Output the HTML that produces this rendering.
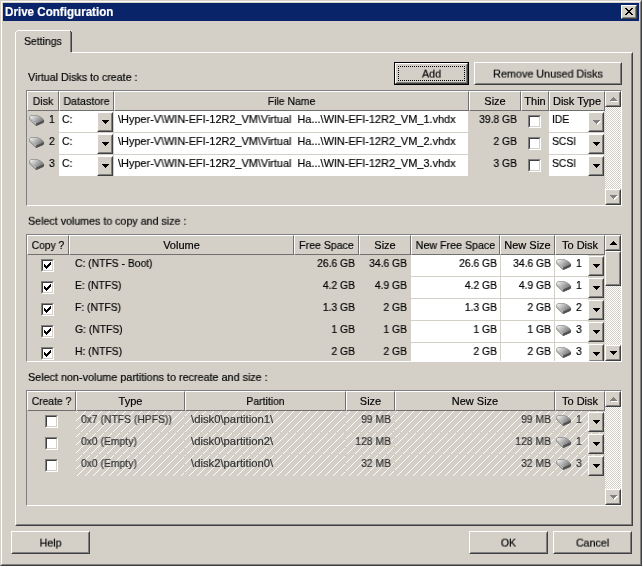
<!DOCTYPE html><html><head><meta charset='utf-8'><title>Drive Configuration</title><style>
*{box-sizing:border-box;margin:0;padding:0}
html,body{width:642px;height:566px;overflow:hidden;background:#d4d0c8}
body{font-family:"Liberation Sans",sans-serif;font-size:11px;color:#000;position:relative}
.a{position:absolute}
.t,.tr,.tc{will-change:transform;-webkit-text-stroke:0.18px}
.t{position:absolute;white-space:pre;line-height:13px;height:13px;transform-origin:0 50%}
.tr{position:absolute;white-space:pre;line-height:13px;height:13px;text-align:right;transform-origin:100% 50%}
.tc{position:absolute;white-space:pre;line-height:13px;height:13px;text-align:center}
.win{left:0;top:0;width:642px;height:566px;border:1px solid;border-color:#d4d0c8 #404040 #404040 #d4d0c8}
.win2{left:1px;top:1px;width:640px;height:564px;border:1px solid;border-color:#fff #808080 #808080 #fff}
.title{left:3px;top:3px;width:636px;height:18px;background:#0a246a}
.btn{background:#d4d0c8;border:1px solid;border-color:#fff #404040 #404040 #fff}
.btn:after{content:"";position:absolute;left:0;top:0;right:0;bottom:0;border:1px solid;border-color:#d4d0c8 #808080 #808080 #d4d0c8}
.hd{background:#d4d0c8;border:1px solid;border-color:#fff #707070 #707070 #fff;height:20px}
.sunk{border:1px solid;border-color:#808080 #fff #fff #808080}
.w{background:#fff}
.cb{width:13px;height:13px;background:#fff;border:1px solid;border-color:#808080 #fff #fff #808080}
.cb:after{content:"";position:absolute;left:0;top:0;right:0;bottom:0;border:1px solid;border-color:#404040 #d4d0c8 #d4d0c8 #404040}
.track{background:repeating-conic-gradient(#fff 0 25%,#d4d0c8 0 50%) 0 0/2px 2px}
.g{color:#303030}
</style></head><body>
<svg width="0" height="0" style="position:absolute"><defs>
<linearGradient id="dg" x1="0" y1="0" x2="1" y2="0.5"><stop offset="0" stop-color="#f6f6f6"/><stop offset="0.38" stop-color="#c6c6c6"/><stop offset="1" stop-color="#7c7c7c"/></linearGradient>

<pattern id="hp" width="8" height="8" patternUnits="userSpaceOnUse" patternTransform="translate(2,0)" shape-rendering="crispEdges"><path d="M7 0h1v1h-1zM6 1h1v1h-1zM5 2h1v1h-1zM4 3h1v1h-1zM3 4h1v1h-1zM2 5h1v1h-1zM1 6h1v1h-1zM0 7h1v1h-1z" fill="#fff" fill-opacity="1"/></pattern>
</defs></svg>
<div class="a win"></div><div class="a win2"></div>
<div class="a title"></div>
<div class="t" style="left:5px;top:5px;color:#fff;font-weight:bold;font-size:11.5px;transform:translateY(.7px) scale(1.01,1.06)">Drive Configuration</div>
<div class="a btn" style="left:621px;top:5px;width:16px;height:14px"></div>
<svg class="a" style="left:625px;top:8px" width="8" height="7" shape-rendering="crispEdges"><path d="M0 0h2v1h1v1h2v-1h1v-1h2v1h-1v1h-1v1h-1v1h1v1h1v1h1v1h-2v-1h-1v-1h-2v1h-1v1h-2v-1h1v-1h1v-1h1v-1h-1v-1h-1v-1h-1z" fill="#000"/></svg>
<div class="a" style="left:15px;top:52px;width:618px;height:474px;border:1px solid;border-color:#fff #404040 #404040 #fff"></div>
<div class="a" style="left:16px;top:53px;width:616px;height:472px;border:1px solid;border-color:#d4d0c8 #808080 #808080 #d4d0c8"></div>
<div class="a" style="left:15px;top:30px;width:57px;height:24px;background:#d4d0c8"></div>
<div class="a" style="left:15px;top:30px;width:2px;height:2px;background:#d4d0c8"></div>
<div class="a" style="left:17px;top:30px;width:53px;height:1px;background:#fff"></div>
<div class="a" style="left:16px;top:31px;width:1px;height:1px;background:#fff"></div>
<div class="a" style="left:15px;top:32px;width:1px;height:22px;background:#fff"></div>
<div class="a" style="left:70px;top:31px;width:1px;height:1px;background:#404040"></div>
<div class="a" style="left:71px;top:32px;width:1px;height:20px;background:#404040"></div>
<div class="a" style="left:70px;top:32px;width:1px;height:20px;background:#808080"></div>
<div class="a" style="left:70px;top:30px;width:2px;height:1px;background:#d4d0c8"></div><div class="a" style="left:71px;top:31px;width:1px;height:1px;background:#d4d0c8"></div>
<div class="t" style="left:24px;top:35px;transform:scaleX(.95)">Settings</div>
<div class="t" style="left:28px;top:71px;transform:scaleX(.97)">Virtual Disks to create :</div>
<div class="t" style="left:28px;top:214px;transform:translateY(.8px) scaleX(.97)">Select volumes to copy and size :</div>
<div class="t" style="left:28px;top:371px;transform:scaleX(.98)">Select non-volume partitions to recreate and size :</div>
<div class="a" style="left:394px;top:62px;width:75px;height:23px;border:1px solid #000"></div>
<div class="a btn" style="left:395px;top:63px;width:73px;height:21px"></div>
<div class="a" style="left:398px;top:66px;width:67px;height:15px;border:1px dotted #000"></div>
<div class="tc" style="left:394px;top:67px;width:75px;transform:translateY(.6px) scaleX(0.97)">Add</div>
<div class="a btn" style="left:474px;top:62px;width:148px;height:23px"></div>
<div class="tc" style="left:474px;top:67px;width:148px;transform:translateY(.6px) scaleX(0.98)">Remove Unused Disks</div>
<div class="a btn" style="left:11px;top:531px;width:79px;height:23px"></div>
<div class="tc" style="left:11px;top:536px;width:79px;transform:translateY(.6px) scaleX(0.97)">Help</div>
<div class="a btn" style="left:469px;top:531px;width:79px;height:23px"></div>
<div class="tc" style="left:469px;top:536px;width:79px;transform:translateY(.6px) scaleX(0.95)">OK</div>
<div class="a btn" style="left:553px;top:531px;width:79px;height:23px"></div>
<div class="tc" style="left:553px;top:536px;width:79px;transform:translateY(.6px) scaleX(0.97)">Cancel</div>
<div class="a sunk" style="left:26px;top:90px;width:596px;height:116px"></div>
<div class="a hd" style="left:27px;top:91px;width:32px"></div>
<div class="tc" style="left:27px;top:95px;width:32px;transform:scaleX(0.95)">Disk</div>
<div class="a hd" style="left:59px;top:91px;width:55px"></div>
<div class="tc" style="left:59px;top:95px;width:55px;transform:scaleX(0.97)">Datastore</div>
<div class="a hd" style="left:114px;top:91px;width:355px"></div>
<div class="tc" style="left:114px;top:95px;width:355px;transform:scaleX(0.95)">File Name</div>
<div class="a hd" style="left:469px;top:91px;width:52px"></div>
<div class="tc" style="left:469px;top:95px;width:52px;transform:scaleX(1)">Size</div>
<div class="a hd" style="left:521px;top:91px;width:28px"></div>
<div class="tc" style="left:521px;top:95px;width:28px;transform:scaleX(1)">Thin</div>
<div class="a hd" style="left:549px;top:91px;width:56px"></div>
<div class="tc" style="left:549px;top:95px;width:56px;transform:scaleX(1)">Disk Type</div>
<div class="a track" style="left:605px;top:91px;width:16px;height:114px"></div>
<div class="a btn" style="left:605px;top:91px;width:16px;height:16px"></div>
<svg class="a" style="left:611px;top:98px" width="7" height="4" shape-rendering="crispEdges"><path d="M0 4h7v-1h-1v-1h-1v-1h-1v-1h-1v1h-1v1h-1v1h-1z" fill="#fff"/></svg>
<svg class="a" style="left:610px;top:97px" width="7" height="4" shape-rendering="crispEdges"><path d="M0 4h7v-1h-1v-1h-1v-1h-1v-1h-1v1h-1v1h-1v1h-1z" fill="#808080"/></svg>
<div class="a btn" style="left:605px;top:189px;width:16px;height:16px"></div>
<svg class="a" style="left:611px;top:196px" width="7" height="4" shape-rendering="crispEdges"><path d="M0 0h7v1h-1v1h-1v1h-1v1h-1v-1h-1v-1h-1v-1h-1z" fill="#fff"/></svg>
<svg class="a" style="left:610px;top:195px" width="7" height="4" shape-rendering="crispEdges"><path d="M0 0h7v1h-1v1h-1v1h-1v1h-1v-1h-1v-1h-1v-1h-1z" fill="#808080"/></svg>
<svg class="a" style="left:28.5px;top:114.5px" width="16" height="11.3" viewBox="0 0 17 12"><path d="M0.9 1.8 L1.8 0.8 L8.6 0.6 L12 2 L14.7 4 L15.6 6.2 L15.2 7.9 L7.8 11.2 L6.8 10.8 L1.2 5.4 L0.7 4.6 Z" fill="#9c9c9c" stroke="#808080" stroke-width="0.8" stroke-linejoin="round"/><path d="M7.9 9 L15.6 5.6 L15.2 7.9 L7.8 11.2 Z" fill="#505050" stroke="#505050" stroke-width="0.9" stroke-linejoin="round"/><path d="M1.1 2 L1.9 1.1 L8.6 0.9 L12 2.3 L14.5 4.2 L15.2 5.5 L7.9 8.7 L1.1 3.5 Z" fill="url(#dg)"/><path d="M1.3 4.3 L7.6 9.6" stroke="#e0e0e0" stroke-width="0.6" fill="none"/></svg>
<div class="t" style="left:49px;top:113px;transform:scaleX(0.94);">1</div>
<div class="a w" style="left:59px;top:111px;width:54px;height:21px"></div>
<div class="t" style="left:62px;top:113px;transform:scaleX(0.94);">C:</div>
<div class="a btn" style="left:97px;top:112px;width:16px;height:20px"></div>
<svg class="a" style="left:102px;top:120px" width="7" height="4" shape-rendering="crispEdges"><path d="M0 0h7v1h-1v1h-1v1h-1v1h-1v-1h-1v-1h-1v-1h-1z" fill="#000"/></svg>
<div class="a w" style="left:114px;top:111px;width:354px;height:21px"></div>
<div class="t" style="left:118px;top:113px;transform:scaleX(0.99);">\Hyper-V\WIN-EFI-12R2_VM\Virtual  Ha...\WIN-EFI-12R2_VM_1.vhdx</div>
<div class="tr" style="left:416.5px;width:100px;top:113px;transform:scaleX(0.94)">39.8 GB</div>
<div class="a cb" style="left:528px;top:115px"></div>
<div class="a w" style="left:549px;top:111px;width:55px;height:21px"></div>
<div class="t" style="left:552px;top:113px;transform:scaleX(0.94);">IDE</div>
<div class="a btn" style="left:588px;top:112px;width:16px;height:20px"></div>
<svg class="a" style="left:594px;top:121px" width="7" height="4" shape-rendering="crispEdges"><path d="M0 0h7v1h-1v1h-1v1h-1v1h-1v-1h-1v-1h-1v-1h-1z" fill="#fff"/></svg>
<svg class="a" style="left:593px;top:120px" width="7" height="4" shape-rendering="crispEdges"><path d="M0 0h7v1h-1v1h-1v1h-1v1h-1v-1h-1v-1h-1v-1h-1z" fill="#808080"/></svg>
<svg class="a" style="left:28.5px;top:136.5px" width="16" height="11.3" viewBox="0 0 17 12"><path d="M0.9 1.8 L1.8 0.8 L8.6 0.6 L12 2 L14.7 4 L15.6 6.2 L15.2 7.9 L7.8 11.2 L6.8 10.8 L1.2 5.4 L0.7 4.6 Z" fill="#9c9c9c" stroke="#808080" stroke-width="0.8" stroke-linejoin="round"/><path d="M7.9 9 L15.6 5.6 L15.2 7.9 L7.8 11.2 Z" fill="#505050" stroke="#505050" stroke-width="0.9" stroke-linejoin="round"/><path d="M1.1 2 L1.9 1.1 L8.6 0.9 L12 2.3 L14.5 4.2 L15.2 5.5 L7.9 8.7 L1.1 3.5 Z" fill="url(#dg)"/><path d="M1.3 4.3 L7.6 9.6" stroke="#e0e0e0" stroke-width="0.6" fill="none"/></svg>
<div class="t" style="left:49px;top:135px;transform:scaleX(0.94);">2</div>
<div class="a w" style="left:59px;top:133px;width:54px;height:21px"></div>
<div class="t" style="left:62px;top:135px;transform:scaleX(0.94);">C:</div>
<div class="a btn" style="left:97px;top:134px;width:16px;height:20px"></div>
<svg class="a" style="left:102px;top:142px" width="7" height="4" shape-rendering="crispEdges"><path d="M0 0h7v1h-1v1h-1v1h-1v1h-1v-1h-1v-1h-1v-1h-1z" fill="#000"/></svg>
<div class="a w" style="left:114px;top:133px;width:354px;height:21px"></div>
<div class="t" style="left:118px;top:135px;transform:scaleX(0.99);">\Hyper-V\WIN-EFI-12R2_VM\Virtual  Ha...\WIN-EFI-12R2_VM_2.vhdx</div>
<div class="tr" style="left:416.5px;width:100px;top:135px;transform:scaleX(0.94)">2 GB</div>
<div class="a cb" style="left:528px;top:137px"></div>
<div class="a w" style="left:549px;top:133px;width:55px;height:21px"></div>
<div class="t" style="left:552px;top:135px;transform:scaleX(0.94);">SCSI</div>
<div class="a btn" style="left:588px;top:134px;width:16px;height:20px"></div>
<svg class="a" style="left:593px;top:142px" width="7" height="4" shape-rendering="crispEdges"><path d="M0 0h7v1h-1v1h-1v1h-1v1h-1v-1h-1v-1h-1v-1h-1z" fill="#000"/></svg>
<svg class="a" style="left:28.5px;top:158.5px" width="16" height="11.3" viewBox="0 0 17 12"><path d="M0.9 1.8 L1.8 0.8 L8.6 0.6 L12 2 L14.7 4 L15.6 6.2 L15.2 7.9 L7.8 11.2 L6.8 10.8 L1.2 5.4 L0.7 4.6 Z" fill="#9c9c9c" stroke="#808080" stroke-width="0.8" stroke-linejoin="round"/><path d="M7.9 9 L15.6 5.6 L15.2 7.9 L7.8 11.2 Z" fill="#505050" stroke="#505050" stroke-width="0.9" stroke-linejoin="round"/><path d="M1.1 2 L1.9 1.1 L8.6 0.9 L12 2.3 L14.5 4.2 L15.2 5.5 L7.9 8.7 L1.1 3.5 Z" fill="url(#dg)"/><path d="M1.3 4.3 L7.6 9.6" stroke="#e0e0e0" stroke-width="0.6" fill="none"/></svg>
<div class="t" style="left:49px;top:157px;transform:scaleX(0.94);">3</div>
<div class="a w" style="left:59px;top:155px;width:54px;height:21px"></div>
<div class="t" style="left:62px;top:157px;transform:scaleX(0.94);">C:</div>
<div class="a btn" style="left:97px;top:156px;width:16px;height:20px"></div>
<svg class="a" style="left:102px;top:164px" width="7" height="4" shape-rendering="crispEdges"><path d="M0 0h7v1h-1v1h-1v1h-1v1h-1v-1h-1v-1h-1v-1h-1z" fill="#000"/></svg>
<div class="a w" style="left:114px;top:155px;width:354px;height:21px"></div>
<div class="t" style="left:118px;top:157px;transform:scaleX(0.99);">\Hyper-V\WIN-EFI-12R2_VM\Virtual  Ha...\WIN-EFI-12R2_VM_3.vhdx</div>
<div class="tr" style="left:416.5px;width:100px;top:157px;transform:scaleX(0.94)">3 GB</div>
<div class="a cb" style="left:528px;top:159px"></div>
<div class="a w" style="left:549px;top:155px;width:55px;height:21px"></div>
<div class="t" style="left:552px;top:157px;transform:scaleX(0.94);">SCSI</div>
<div class="a btn" style="left:588px;top:156px;width:16px;height:20px"></div>
<svg class="a" style="left:593px;top:164px" width="7" height="4" shape-rendering="crispEdges"><path d="M0 0h7v1h-1v1h-1v1h-1v1h-1v-1h-1v-1h-1v-1h-1z" fill="#000"/></svg>
<div class="a sunk" style="left:26px;top:234px;width:596px;height:128px"></div>
<div class="a hd" style="left:27px;top:235px;width:42px"></div>
<div class="tc" style="left:27px;top:239px;width:42px;transform:scaleX(0.93)">Copy ?</div>
<div class="a hd" style="left:69px;top:235px;width:225px"></div>
<div class="tc" style="left:69px;top:239px;width:225px;transform:scaleX(1)">Volume</div>
<div class="a hd" style="left:294px;top:235px;width:65px"></div>
<div class="tc" style="left:294px;top:239px;width:65px;transform:scaleX(0.96)">Free Space</div>
<div class="a hd" style="left:359px;top:235px;width:52px"></div>
<div class="tc" style="left:359px;top:239px;width:52px;transform:scaleX(1)">Size</div>
<div class="a hd" style="left:411px;top:235px;width:89px"></div>
<div class="tc" style="left:411px;top:239px;width:89px;transform:scaleX(0.97)">New Free Space</div>
<div class="a hd" style="left:500px;top:235px;width:55px"></div>
<div class="tc" style="left:500px;top:239px;width:55px;transform:scaleX(1)">New Size</div>
<div class="a hd" style="left:555px;top:235px;width:50px"></div>
<div class="tc" style="left:555px;top:239px;width:50px;transform:scaleX(1)">To Disk</div>
<div class="a track" style="left:605px;top:235px;width:16px;height:126px"></div>
<div class="a btn" style="left:605px;top:235px;width:16px;height:16px"></div>
<svg class="a" style="left:610px;top:241px" width="7" height="4" shape-rendering="crispEdges"><path d="M0 4h7v-1h-1v-1h-1v-1h-1v-1h-1v1h-1v1h-1v1h-1z" fill="#000"/></svg>
<div class="a btn" style="left:605px;top:345px;width:16px;height:16px"></div>
<svg class="a" style="left:610px;top:351px" width="7" height="4" shape-rendering="crispEdges"><path d="M0 0h7v1h-1v1h-1v1h-1v1h-1v-1h-1v-1h-1v-1h-1z" fill="#000"/></svg>
<div class="a btn" style="left:605px;top:251px;width:16px;height:35px"></div>
<div class="a cb" style="left:41px;top:259px"></div>
<svg class="a" style="left:44px;top:262px" width="7" height="7" shape-rendering="crispEdges"><path d="M0 2v3h1v1h1v1h1v-1h1v-1h1v-1h1v-1h1v-3h-1v1h-1v1h-1v1h-1v1h-1v-1h-1v-1z" fill="#000"/></svg>
<div class="t" style="left:75px;top:257px;transform:scaleX(0.94);">C: (NTFS - Boot)</div>
<div class="tr" style="left:254.5px;width:100px;top:257px;transform:scaleX(0.94)">26.6 GB</div>
<div class="tr" style="left:306.5px;width:100px;top:257px;transform:scaleX(0.94)">34.6 GB</div>
<div class="a w" style="left:411px;top:255px;width:89px;height:21px"></div>
<div class="tr" style="left:396.5px;width:100px;top:257px;transform:scaleX(0.94)">26.6 GB</div>
<div class="a w" style="left:501px;top:255px;width:53px;height:21px"></div>
<div class="tr" style="left:450.5px;width:100px;top:257px;transform:scaleX(0.94)">34.6 GB</div>
<div class="a w" style="left:555px;top:255px;width:33px;height:21px"></div>
<svg class="a" style="left:555.5px;top:258.5px" width="16" height="11.3" viewBox="0 0 17 12"><path d="M0.9 1.8 L1.8 0.8 L8.6 0.6 L12 2 L14.7 4 L15.6 6.2 L15.2 7.9 L7.8 11.2 L6.8 10.8 L1.2 5.4 L0.7 4.6 Z" fill="#9c9c9c" stroke="#808080" stroke-width="0.8" stroke-linejoin="round"/><path d="M7.9 9 L15.6 5.6 L15.2 7.9 L7.8 11.2 Z" fill="#505050" stroke="#505050" stroke-width="0.9" stroke-linejoin="round"/><path d="M1.1 2 L1.9 1.1 L8.6 0.9 L12 2.3 L14.5 4.2 L15.2 5.5 L7.9 8.7 L1.1 3.5 Z" fill="url(#dg)"/><path d="M1.3 4.3 L7.6 9.6" stroke="#e0e0e0" stroke-width="0.6" fill="none"/></svg>
<div class="t" style="left:576px;top:257px;transform:scaleX(0.94);">1</div>
<div class="a btn" style="left:588px;top:256px;width:16px;height:20px"></div>
<svg class="a" style="left:593px;top:264px" width="7" height="4" shape-rendering="crispEdges"><path d="M0 0h7v1h-1v1h-1v1h-1v1h-1v-1h-1v-1h-1v-1h-1z" fill="#000"/></svg>
<div class="a cb" style="left:41px;top:281px"></div>
<svg class="a" style="left:44px;top:284px" width="7" height="7" shape-rendering="crispEdges"><path d="M0 2v3h1v1h1v1h1v-1h1v-1h1v-1h1v-1h1v-3h-1v1h-1v1h-1v1h-1v1h-1v-1h-1v-1z" fill="#000"/></svg>
<div class="t" style="left:75px;top:279px;transform:scaleX(0.94);">E: (NTFS)</div>
<div class="tr" style="left:254.5px;width:100px;top:279px;transform:scaleX(0.94)">4.2 GB</div>
<div class="tr" style="left:306.5px;width:100px;top:279px;transform:scaleX(0.94)">4.9 GB</div>
<div class="a w" style="left:411px;top:277px;width:89px;height:21px"></div>
<div class="tr" style="left:396.5px;width:100px;top:279px;transform:scaleX(0.94)">4.2 GB</div>
<div class="a w" style="left:501px;top:277px;width:53px;height:21px"></div>
<div class="tr" style="left:450.5px;width:100px;top:279px;transform:scaleX(0.94)">4.9 GB</div>
<div class="a w" style="left:555px;top:277px;width:33px;height:21px"></div>
<svg class="a" style="left:555.5px;top:280.5px" width="16" height="11.3" viewBox="0 0 17 12"><path d="M0.9 1.8 L1.8 0.8 L8.6 0.6 L12 2 L14.7 4 L15.6 6.2 L15.2 7.9 L7.8 11.2 L6.8 10.8 L1.2 5.4 L0.7 4.6 Z" fill="#9c9c9c" stroke="#808080" stroke-width="0.8" stroke-linejoin="round"/><path d="M7.9 9 L15.6 5.6 L15.2 7.9 L7.8 11.2 Z" fill="#505050" stroke="#505050" stroke-width="0.9" stroke-linejoin="round"/><path d="M1.1 2 L1.9 1.1 L8.6 0.9 L12 2.3 L14.5 4.2 L15.2 5.5 L7.9 8.7 L1.1 3.5 Z" fill="url(#dg)"/><path d="M1.3 4.3 L7.6 9.6" stroke="#e0e0e0" stroke-width="0.6" fill="none"/></svg>
<div class="t" style="left:576px;top:279px;transform:scaleX(0.94);">1</div>
<div class="a btn" style="left:588px;top:278px;width:16px;height:20px"></div>
<svg class="a" style="left:593px;top:286px" width="7" height="4" shape-rendering="crispEdges"><path d="M0 0h7v1h-1v1h-1v1h-1v1h-1v-1h-1v-1h-1v-1h-1z" fill="#000"/></svg>
<div class="a cb" style="left:41px;top:303px"></div>
<svg class="a" style="left:44px;top:306px" width="7" height="7" shape-rendering="crispEdges"><path d="M0 2v3h1v1h1v1h1v-1h1v-1h1v-1h1v-1h1v-3h-1v1h-1v1h-1v1h-1v1h-1v-1h-1v-1z" fill="#000"/></svg>
<div class="t" style="left:75px;top:301px;transform:scaleX(0.94);">F: (NTFS)</div>
<div class="tr" style="left:254.5px;width:100px;top:301px;transform:scaleX(0.94)">1.3 GB</div>
<div class="tr" style="left:306.5px;width:100px;top:301px;transform:scaleX(0.94)">2 GB</div>
<div class="a w" style="left:411px;top:299px;width:89px;height:21px"></div>
<div class="tr" style="left:396.5px;width:100px;top:301px;transform:scaleX(0.94)">1.3 GB</div>
<div class="a w" style="left:501px;top:299px;width:53px;height:21px"></div>
<div class="tr" style="left:450.5px;width:100px;top:301px;transform:scaleX(0.94)">2 GB</div>
<div class="a w" style="left:555px;top:299px;width:33px;height:21px"></div>
<svg class="a" style="left:555.5px;top:302.5px" width="16" height="11.3" viewBox="0 0 17 12"><path d="M0.9 1.8 L1.8 0.8 L8.6 0.6 L12 2 L14.7 4 L15.6 6.2 L15.2 7.9 L7.8 11.2 L6.8 10.8 L1.2 5.4 L0.7 4.6 Z" fill="#9c9c9c" stroke="#808080" stroke-width="0.8" stroke-linejoin="round"/><path d="M7.9 9 L15.6 5.6 L15.2 7.9 L7.8 11.2 Z" fill="#505050" stroke="#505050" stroke-width="0.9" stroke-linejoin="round"/><path d="M1.1 2 L1.9 1.1 L8.6 0.9 L12 2.3 L14.5 4.2 L15.2 5.5 L7.9 8.7 L1.1 3.5 Z" fill="url(#dg)"/><path d="M1.3 4.3 L7.6 9.6" stroke="#e0e0e0" stroke-width="0.6" fill="none"/></svg>
<div class="t" style="left:576px;top:301px;transform:scaleX(0.94);">2</div>
<div class="a btn" style="left:588px;top:300px;width:16px;height:20px"></div>
<svg class="a" style="left:593px;top:308px" width="7" height="4" shape-rendering="crispEdges"><path d="M0 0h7v1h-1v1h-1v1h-1v1h-1v-1h-1v-1h-1v-1h-1z" fill="#000"/></svg>
<div class="a cb" style="left:41px;top:325px"></div>
<svg class="a" style="left:44px;top:328px" width="7" height="7" shape-rendering="crispEdges"><path d="M0 2v3h1v1h1v1h1v-1h1v-1h1v-1h1v-1h1v-3h-1v1h-1v1h-1v1h-1v1h-1v-1h-1v-1z" fill="#000"/></svg>
<div class="t" style="left:75px;top:323px;transform:scaleX(0.94);">G: (NTFS)</div>
<div class="tr" style="left:254.5px;width:100px;top:323px;transform:scaleX(0.94)">1 GB</div>
<div class="tr" style="left:306.5px;width:100px;top:323px;transform:scaleX(0.94)">1 GB</div>
<div class="a w" style="left:411px;top:321px;width:89px;height:21px"></div>
<div class="tr" style="left:396.5px;width:100px;top:323px;transform:scaleX(0.94)">1 GB</div>
<div class="a w" style="left:501px;top:321px;width:53px;height:21px"></div>
<div class="tr" style="left:450.5px;width:100px;top:323px;transform:scaleX(0.94)">1 GB</div>
<div class="a w" style="left:555px;top:321px;width:33px;height:21px"></div>
<svg class="a" style="left:555.5px;top:324.5px" width="16" height="11.3" viewBox="0 0 17 12"><path d="M0.9 1.8 L1.8 0.8 L8.6 0.6 L12 2 L14.7 4 L15.6 6.2 L15.2 7.9 L7.8 11.2 L6.8 10.8 L1.2 5.4 L0.7 4.6 Z" fill="#9c9c9c" stroke="#808080" stroke-width="0.8" stroke-linejoin="round"/><path d="M7.9 9 L15.6 5.6 L15.2 7.9 L7.8 11.2 Z" fill="#505050" stroke="#505050" stroke-width="0.9" stroke-linejoin="round"/><path d="M1.1 2 L1.9 1.1 L8.6 0.9 L12 2.3 L14.5 4.2 L15.2 5.5 L7.9 8.7 L1.1 3.5 Z" fill="url(#dg)"/><path d="M1.3 4.3 L7.6 9.6" stroke="#e0e0e0" stroke-width="0.6" fill="none"/></svg>
<div class="t" style="left:576px;top:323px;transform:scaleX(0.94);">3</div>
<div class="a btn" style="left:588px;top:322px;width:16px;height:20px"></div>
<svg class="a" style="left:593px;top:330px" width="7" height="4" shape-rendering="crispEdges"><path d="M0 0h7v1h-1v1h-1v1h-1v1h-1v-1h-1v-1h-1v-1h-1z" fill="#000"/></svg>
<div class="a cb" style="left:41px;top:347px"></div>
<svg class="a" style="left:44px;top:350px" width="7" height="7" shape-rendering="crispEdges"><path d="M0 2v3h1v1h1v1h1v-1h1v-1h1v-1h1v-1h1v-3h-1v1h-1v1h-1v1h-1v1h-1v-1h-1v-1z" fill="#000"/></svg>
<div class="t" style="left:75px;top:345px;transform:scaleX(0.94);">H: (NTFS)</div>
<div class="tr" style="left:254.5px;width:100px;top:345px;transform:scaleX(0.94)">2 GB</div>
<div class="tr" style="left:306.5px;width:100px;top:345px;transform:scaleX(0.94)">2 GB</div>
<div class="a w" style="left:411px;top:343px;width:89px;height:18px"></div>
<div class="tr" style="left:396.5px;width:100px;top:345px;transform:scaleX(0.94)">2 GB</div>
<div class="a w" style="left:501px;top:343px;width:53px;height:18px"></div>
<div class="tr" style="left:450.5px;width:100px;top:345px;transform:scaleX(0.94)">2 GB</div>
<div class="a w" style="left:555px;top:343px;width:33px;height:18px"></div>
<svg class="a" style="left:555.5px;top:346.5px" width="16" height="11.3" viewBox="0 0 17 12"><path d="M0.9 1.8 L1.8 0.8 L8.6 0.6 L12 2 L14.7 4 L15.6 6.2 L15.2 7.9 L7.8 11.2 L6.8 10.8 L1.2 5.4 L0.7 4.6 Z" fill="#9c9c9c" stroke="#808080" stroke-width="0.8" stroke-linejoin="round"/><path d="M7.9 9 L15.6 5.6 L15.2 7.9 L7.8 11.2 Z" fill="#505050" stroke="#505050" stroke-width="0.9" stroke-linejoin="round"/><path d="M1.1 2 L1.9 1.1 L8.6 0.9 L12 2.3 L14.5 4.2 L15.2 5.5 L7.9 8.7 L1.1 3.5 Z" fill="url(#dg)"/><path d="M1.3 4.3 L7.6 9.6" stroke="#e0e0e0" stroke-width="0.6" fill="none"/></svg>
<div class="t" style="left:576px;top:345px;transform:scaleX(0.94);">3</div>
<div class="a btn" style="left:588px;top:344px;width:16px;height:17px;border-bottom:none"></div>
<svg class="a" style="left:593px;top:352px" width="7" height="4" shape-rendering="crispEdges"><path d="M0 0h7v1h-1v1h-1v1h-1v1h-1v-1h-1v-1h-1v-1h-1z" fill="#000"/></svg>
<div class="a sunk" style="left:26px;top:390px;width:596px;height:116px"></div>
<div class="a hd" style="left:27px;top:391px;width:49px"></div>
<div class="tc" style="left:27px;top:395px;width:49px;transform:scaleX(0.94)">Create ?</div>
<div class="a hd" style="left:76px;top:391px;width:109px"></div>
<div class="tc" style="left:76px;top:395px;width:109px;transform:scaleX(1)">Type</div>
<div class="a hd" style="left:185px;top:391px;width:161px"></div>
<div class="tc" style="left:185px;top:395px;width:161px;transform:scaleX(0.95)">Partition</div>
<div class="a hd" style="left:346px;top:391px;width:49px"></div>
<div class="tc" style="left:346px;top:395px;width:49px;transform:scaleX(1)">Size</div>
<div class="a hd" style="left:395px;top:391px;width:160px"></div>
<div class="tc" style="left:395px;top:395px;width:160px;transform:scaleX(1)">New Size</div>
<div class="a hd" style="left:555px;top:391px;width:50px"></div>
<div class="tc" style="left:555px;top:395px;width:50px;transform:scaleX(1)">To Disk</div>
<div class="a track" style="left:605px;top:391px;width:16px;height:114px"></div>
<div class="a btn" style="left:605px;top:391px;width:16px;height:16px"></div>
<svg class="a" style="left:611px;top:398px" width="7" height="4" shape-rendering="crispEdges"><path d="M0 4h7v-1h-1v-1h-1v-1h-1v-1h-1v1h-1v1h-1v1h-1z" fill="#fff"/></svg>
<svg class="a" style="left:610px;top:397px" width="7" height="4" shape-rendering="crispEdges"><path d="M0 4h7v-1h-1v-1h-1v-1h-1v-1h-1v1h-1v1h-1v1h-1z" fill="#808080"/></svg>
<div class="a btn" style="left:605px;top:489px;width:16px;height:16px"></div>
<svg class="a" style="left:611px;top:496px" width="7" height="4" shape-rendering="crispEdges"><path d="M0 0h7v1h-1v1h-1v1h-1v1h-1v-1h-1v-1h-1v-1h-1z" fill="#fff"/></svg>
<svg class="a" style="left:610px;top:495px" width="7" height="4" shape-rendering="crispEdges"><path d="M0 0h7v1h-1v1h-1v1h-1v1h-1v-1h-1v-1h-1v-1h-1z" fill="#808080"/></svg>
<svg class="a" style="left:76px;top:411px" width="529" height="65"><rect width="529" height="65" fill="url(#hp)"/></svg>
<div class="a" style="left:76px;top:432px;width:529px;height:1px;background:#d4d0c8"></div>
<div class="a" style="left:76px;top:454px;width:529px;height:1px;background:#d4d0c8"></div>
<div class="a" style="left:184px;top:411px;width:1px;height:65px;background:#d4d0c8"></div>
<div class="a" style="left:345px;top:411px;width:1px;height:65px;background:#d4d0c8"></div>
<div class="a" style="left:394px;top:411px;width:1px;height:65px;background:#d4d0c8"></div>
<div class="a" style="left:554px;top:411px;width:1px;height:65px;background:#d4d0c8"></div>
<div class="a cb" style="left:45px;top:415px"></div>
<div class="t g" style="left:81px;top:413px;transform:scaleX(0.94);">0x7 (NTFS (HPFS))</div>
<div class="t g" style="left:191px;top:413px;transform:scaleX(1.025);">\disk0\partition1\</div>
<div class="tr g" style="left:291px;width:100px;top:413px;transform:scaleX(0.94)">99 MB</div>
<div class="tr g" style="left:451px;width:100px;top:413px;transform:scaleX(0.94)">99 MB</div>
<svg class="a" style="left:555.5px;top:414.5px" width="16" height="11.3" viewBox="0 0 17 12"><path d="M0.9 1.8 L1.8 0.8 L8.6 0.6 L12 2 L14.7 4 L15.6 6.2 L15.2 7.9 L7.8 11.2 L6.8 10.8 L1.2 5.4 L0.7 4.6 Z" fill="#9c9c9c" stroke="#808080" stroke-width="0.8" stroke-linejoin="round"/><path d="M7.9 9 L15.6 5.6 L15.2 7.9 L7.8 11.2 Z" fill="#505050" stroke="#505050" stroke-width="0.9" stroke-linejoin="round"/><path d="M1.1 2 L1.9 1.1 L8.6 0.9 L12 2.3 L14.5 4.2 L15.2 5.5 L7.9 8.7 L1.1 3.5 Z" fill="url(#dg)"/><path d="M1.3 4.3 L7.6 9.6" stroke="#e0e0e0" stroke-width="0.6" fill="none"/></svg>
<div class="t g" style="left:576px;top:413px;transform:scaleX(0.94);">1</div>
<div class="a btn" style="left:588px;top:412px;width:16px;height:20px"></div>
<svg class="a" style="left:593px;top:420px" width="7" height="4" shape-rendering="crispEdges"><path d="M0 0h7v1h-1v1h-1v1h-1v1h-1v-1h-1v-1h-1v-1h-1z" fill="#000"/></svg>
<div class="a cb" style="left:45px;top:437px"></div>
<div class="t g" style="left:81px;top:435px;transform:scaleX(0.94);">0x0 (Empty)</div>
<div class="t g" style="left:191px;top:435px;transform:scaleX(1.025);">\disk0\partition2\</div>
<div class="tr g" style="left:291px;width:100px;top:435px;transform:scaleX(0.94)">128 MB</div>
<div class="tr g" style="left:451px;width:100px;top:435px;transform:scaleX(0.94)">128 MB</div>
<svg class="a" style="left:555.5px;top:436.5px" width="16" height="11.3" viewBox="0 0 17 12"><path d="M0.9 1.8 L1.8 0.8 L8.6 0.6 L12 2 L14.7 4 L15.6 6.2 L15.2 7.9 L7.8 11.2 L6.8 10.8 L1.2 5.4 L0.7 4.6 Z" fill="#9c9c9c" stroke="#808080" stroke-width="0.8" stroke-linejoin="round"/><path d="M7.9 9 L15.6 5.6 L15.2 7.9 L7.8 11.2 Z" fill="#505050" stroke="#505050" stroke-width="0.9" stroke-linejoin="round"/><path d="M1.1 2 L1.9 1.1 L8.6 0.9 L12 2.3 L14.5 4.2 L15.2 5.5 L7.9 8.7 L1.1 3.5 Z" fill="url(#dg)"/><path d="M1.3 4.3 L7.6 9.6" stroke="#e0e0e0" stroke-width="0.6" fill="none"/></svg>
<div class="t g" style="left:576px;top:435px;transform:scaleX(0.94);">1</div>
<div class="a btn" style="left:588px;top:434px;width:16px;height:20px"></div>
<svg class="a" style="left:593px;top:442px" width="7" height="4" shape-rendering="crispEdges"><path d="M0 0h7v1h-1v1h-1v1h-1v1h-1v-1h-1v-1h-1v-1h-1z" fill="#000"/></svg>
<div class="a cb" style="left:45px;top:459px"></div>
<div class="t g" style="left:81px;top:457px;transform:scaleX(0.94);">0x0 (Empty)</div>
<div class="t g" style="left:191px;top:457px;transform:scaleX(1.025);">\disk2\partition0\</div>
<div class="tr g" style="left:291px;width:100px;top:457px;transform:scaleX(0.94)">32 MB</div>
<div class="tr g" style="left:451px;width:100px;top:457px;transform:scaleX(0.94)">32 MB</div>
<svg class="a" style="left:555.5px;top:458.5px" width="16" height="11.3" viewBox="0 0 17 12"><path d="M0.9 1.8 L1.8 0.8 L8.6 0.6 L12 2 L14.7 4 L15.6 6.2 L15.2 7.9 L7.8 11.2 L6.8 10.8 L1.2 5.4 L0.7 4.6 Z" fill="#9c9c9c" stroke="#808080" stroke-width="0.8" stroke-linejoin="round"/><path d="M7.9 9 L15.6 5.6 L15.2 7.9 L7.8 11.2 Z" fill="#505050" stroke="#505050" stroke-width="0.9" stroke-linejoin="round"/><path d="M1.1 2 L1.9 1.1 L8.6 0.9 L12 2.3 L14.5 4.2 L15.2 5.5 L7.9 8.7 L1.1 3.5 Z" fill="url(#dg)"/><path d="M1.3 4.3 L7.6 9.6" stroke="#e0e0e0" stroke-width="0.6" fill="none"/></svg>
<div class="t g" style="left:576px;top:457px;transform:scaleX(0.94);">3</div>
<div class="a btn" style="left:588px;top:456px;width:16px;height:20px"></div>
<svg class="a" style="left:593px;top:464px" width="7" height="4" shape-rendering="crispEdges"><path d="M0 0h7v1h-1v1h-1v1h-1v1h-1v-1h-1v-1h-1v-1h-1z" fill="#000"/></svg>
</body></html>
